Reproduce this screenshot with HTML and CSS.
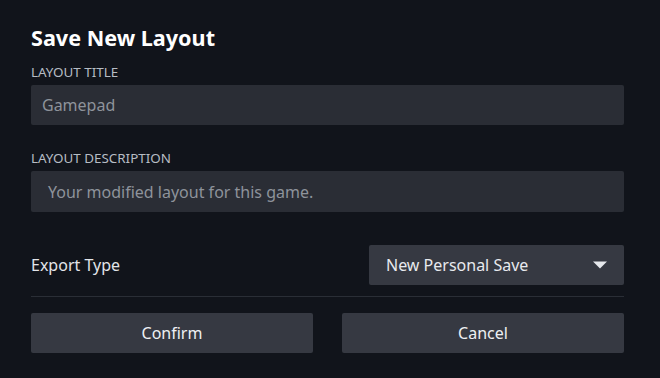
FILE: index.html
```html
<!DOCTYPE html>
<html>
<head>
<meta charset="utf-8">
<link rel="stylesheet" href="styles.css">
</head>
<body>
<div class="dialog">
  <h1 class="title">Save New Layout</h1>
  <div class="field">
    <div class="label">LAYOUT TITLE</div>
    <div class="input">Gamepad</div>
  </div>
  <div class="field field-desc">
    <div class="label">LAYOUT DESCRIPTION</div>
    <div class="input input-desc">Your modified layout for this game.</div>
  </div>
  <div class="row">
    <div class="row-label">Export Type</div>
    <div class="dropdown">
      <span>New Personal Save</span>
      <svg class="caret" width="14" height="8" viewBox="0 0 14 8"><path d="M0 0.5 H14 L7 7.5 Z" fill="#e6e8ec"/></svg>
    </div>
  </div>
  <div class="sep"></div>
  <div class="buttons">
    <div class="btn">Confirm</div>
    <div class="btn">Cancel</div>
  </div>
</div>
</body>
</html>
```
FILE: styles.css
```css
html, body {
  margin: 0;
  padding: 0;
  background: #11141b;
  width: 660px;
  height: 378px;
  overflow: hidden;
}
.dialog {
  padding: 24px 36px 0 31px;
  font-family: "Noto Sans", "Open Sans", sans-serif;
  color: #dfe3e8;
}
.title {
  margin: 0;
  font-size: 21.6px;
  line-height: 28px;
  font-weight: 700;
  color: #ffffff;
}
.field .label {
  margin-top: 10px;
  font-size: 13.4px;
  line-height: 20px;
  color: #b6bcc4;
}
.field-desc {
  margin-top: 23px;
}
.field-desc .label {
  margin-top: 0;
}
.input {
  margin-top: 3px;
  height: 40px;
  box-sizing: border-box;
  background: #2a2d35;
  border-radius: 2px;
  padding: 0 11px;
  display: flex;
  align-items: center;
  font-size: 16px;
  color: #8e939b;
}
.input-desc {
  height: 41px;
  padding-left: 17px;
}
.row {
  margin-top: 33px;
  height: 40px;
  display: flex;
  align-items: center;
  justify-content: space-between;
}
.row-label {
  font-size: 16px;
  color: #e2e5ea;
}
.dropdown {
  width: 255px;
  height: 40px;
  box-sizing: border-box;
  background: #363942;
  border-radius: 2px;
  padding: 0 17px 0 17px;
  display: flex;
  align-items: center;
  justify-content: space-between;
  font-size: 16px;
  color: #e8eaee;
}
.caret {
  display: block;
}
.sep {
  margin-top: 11px;
  height: 1px;
  background: #2a2e36;
}
.buttons {
  margin-top: 16px;
  display: flex;
  gap: 29px;
}
.btn {
  flex: 1;
  height: 40px;
  background: #363942;
  border-radius: 2px;
  display: flex;
  align-items: center;
  justify-content: center;
  font-size: 16px;
  color: #eef0f3;
}
```
